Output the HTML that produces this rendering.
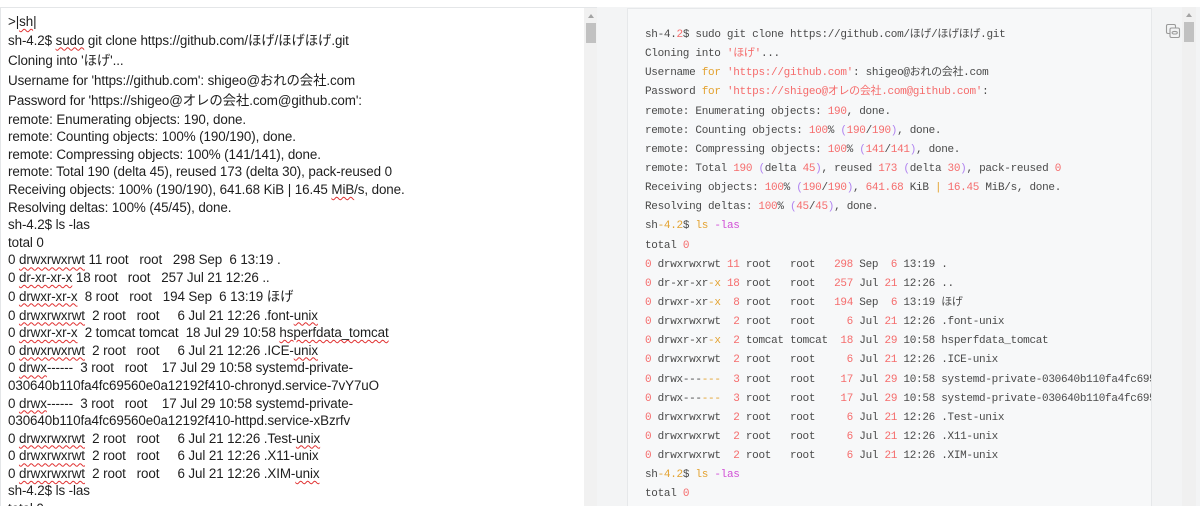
<!DOCTYPE html>
<html><head><meta charset="utf-8"><style>
*{margin:0;padding:0;box-sizing:border-box}
html,body{width:1200px;height:506px;overflow:hidden}
body{background:#fff;position:relative;font-family:"Liberation Sans","Noto Sans CJK JP",sans-serif}
#left{position:absolute;left:0;top:7px;width:597px;height:499px;border-top:1px solid #e4e6e8;border-left:1px solid #e4e6e8;background:#fff;overflow:hidden}
#ltext{position:absolute;left:7px;top:5px;font-size:13.4px;color:#1e1e1e;letter-spacing:-0.1px}
#ltext div{height:17.6px;line-height:17.6px;white-space:pre}
#ltext div.j{height:20px;line-height:20px}
.w{text-decoration:underline wavy #e03030;text-decoration-thickness:1px;text-underline-offset:2px}
.sb{position:absolute;top:0;width:14px;height:100%;background:#f1f1f1}
.sb .up{position:absolute;left:4px;top:6px;width:0;height:0;border-left:3px solid transparent;border-right:3px solid transparent;border-bottom:4px solid #a3a3a3}
.sb .th{position:absolute;left:2px;top:15px;width:10px;height:20px;background:#c1c1c1}
#right{position:absolute;left:597px;top:7px;width:603px;height:499px;background:#f3f4f5;overflow:hidden}
#code{position:absolute;left:30px;top:1px;width:525px;height:510px;background:#f7f8f9;border-left:1px solid #e6e8ea;border-right:1px solid #e6e8ea;border-top:1px solid #e6e8ea;overflow:hidden}
#ctext{position:absolute;left:17px;top:17px;font-family:"Liberation Mono","Noto Sans CJK JP",monospace;font-size:11px;letter-spacing:-0.3px;color:#4a4a4a}
#ctext div{height:19.15px;line-height:19.15px;white-space:pre}
.r{color:#f56c6c}.o{color:#e3a230}.p{color:#b184f0}.m{color:#d14fd6}
</style></head><body>
<div id="left">
<div id="ltext"><div>&gt;|<span class="w">sh</span>|</div><div class="j">sh-4.2$ <span class="w">sudo</span> git clone https://github.com/ほげ/ほげほげ.git</div><div class="j">Cloning into 'ほげ'...</div><div class="j">Username for 'https://github.com': shigeo@おれの会社.com</div><div class="j">Password for 'https://shigeo@オレの会社.com@github.com':</div><div>remote: Enumerating objects: 190, done.</div><div>remote: Counting objects: 100% (190/190), done.</div><div>remote: Compressing objects: 100% (141/141), done.</div><div>remote: Total 190 (delta 45), reused 173 (delta 30), pack-reused 0</div><div>Receiving objects: 100% (190/190), 641.68 KiB | 16.45 <span class="w">MiB</span>/s, done.</div><div>Resolving deltas: 100% (45/45), done.</div><div>sh-4.2$ ls -las</div><div>total 0</div><div>0 <span class="w">drwxrwxrwt</span> 11 root   root   298 Sep  6 13:19 .</div><div>0 <span class="w">dr-xr-xr-x</span> 18 root   root   257 Jul 21 12:26 ..</div><div class="j">0 <span class="w">drwxr-xr-x</span>  8 root   root   194 Sep  6 13:19 ほげ</div><div>0 <span class="w">drwxrwxrwt</span>  2 root   root     6 Jul 21 12:26 .font-<span class="w">unix</span></div><div>0 <span class="w">drwxr-xr-x</span>  2 tomcat tomcat  18 Jul 29 10:58 <span class="w">hsperfdata_tomcat</span></div><div>0 <span class="w">drwxrwxrwt</span>  2 root   root     6 Jul 21 12:26 .ICE-<span class="w">unix</span></div><div>0 <span class="w">drwx</span>------  3 root   root    17 Jul 29 10:58 systemd-private-</div><div>030640b110fa4fc69560e0a12192f410-chronyd.service-7vY7uO</div><div>0 <span class="w">drwx</span>------  3 root   root    17 Jul 29 10:58 systemd-private-</div><div>030640b110fa4fc69560e0a12192f410-httpd.service-xBzrfv</div><div>0 <span class="w">drwxrwxrwt</span>  2 root   root     6 Jul 21 12:26 .Test-<span class="w">unix</span></div><div>0 <span class="w">drwxrwxrwt</span>  2 root   root     6 Jul 21 12:26 .X11-unix</div><div>0 <span class="w">drwxrwxrwt</span>  2 root   root     6 Jul 21 12:26 .XIM-<span class="w">unix</span></div><div>sh-4.2$ ls -las</div><div>total 0</div></div>
<div class="sb" style="left:583px"><div class="up"></div><div class="th"></div></div>
</div>
<div id="right">
<div id="code"><div id="ctext"><div>sh-4.<span class="r">2</span>$ sudo git clone https://github.com/ほげ/ほげほげ.git</div><div>Cloning into <span class="r">'ほげ'</span>...</div><div>Username <span class="o">for</span> <span class="r">'https://github.com'</span>: shigeo@おれの会社.com</div><div>Password <span class="o">for</span> <span class="r">'https://shigeo@オレの会社.com@github.com'</span>:</div><div>remote: Enumerating objects: <span class="r">190</span>, done.</div><div>remote: Counting objects: <span class="r">100</span>% <span class="p">(</span><span class="r">190</span>/<span class="r">190</span><span class="p">)</span>, done.</div><div>remote: Compressing objects: <span class="r">100</span>% <span class="p">(</span><span class="r">141</span>/<span class="r">141</span><span class="p">)</span>, done.</div><div>remote: Total <span class="r">190</span> <span class="p">(</span>delta <span class="r">45</span><span class="p">)</span>, reused <span class="r">173</span> <span class="p">(</span>delta <span class="r">30</span><span class="p">)</span>, pack-reused <span class="r">0</span></div><div>Receiving objects: <span class="r">100</span>% <span class="p">(</span><span class="r">190</span>/<span class="r">190</span><span class="p">)</span>, <span class="r">641.68</span> KiB <span class="o">|</span> <span class="r">16.45</span> MiB/s, done.</div><div>Resolving deltas: <span class="r">100</span>% <span class="p">(</span><span class="r">45</span>/<span class="r">45</span><span class="p">)</span>, done.</div><div>sh<span class="o">-4.2</span>$ <span class="o">ls</span> <span class="m">-las</span></div><div>total <span class="r">0</span></div><div><span class="r">0</span> drwxrwxrwt <span class="r">11</span> root   root   <span class="r">298</span> Sep  <span class="r">6</span> 13:19 .</div><div><span class="r">0</span> dr-xr-xr<span class="o">-x</span> <span class="r">18</span> root   root   <span class="r">257</span> Jul <span class="r">21</span> 12:26 ..</div><div><span class="r">0</span> drwxr-xr<span class="o">-x</span>  <span class="r">8</span> root   root   <span class="r">194</span> Sep  <span class="r">6</span> 13:19 ほげ</div><div><span class="r">0</span> drwxrwxrwt  <span class="r">2</span> root   root     <span class="r">6</span> Jul <span class="r">21</span> 12:26 .font-unix</div><div><span class="r">0</span> drwxr-xr<span class="o">-x</span>  <span class="r">2</span> tomcat tomcat  <span class="r">18</span> Jul <span class="r">29</span> 10:58 hsperfdata_tomcat</div><div><span class="r">0</span> drwxrwxrwt  <span class="r">2</span> root   root     <span class="r">6</span> Jul <span class="r">21</span> 12:26 .ICE-unix</div><div><span class="r">0</span> drwx---<span class="o">---</span>  <span class="r">3</span> root   root    <span class="r">17</span> Jul <span class="r">29</span> 10:58 systemd-private-030640b110fa4fc69560e0a12192f410-chronyd.service-7vY7uO</div><div><span class="r">0</span> drwx---<span class="o">---</span>  <span class="r">3</span> root   root    <span class="r">17</span> Jul <span class="r">29</span> 10:58 systemd-private-030640b110fa4fc69560e0a12192f410-httpd.service-xBzrfv</div><div><span class="r">0</span> drwxrwxrwt  <span class="r">2</span> root   root     <span class="r">6</span> Jul <span class="r">21</span> 12:26 .Test-unix</div><div><span class="r">0</span> drwxrwxrwt  <span class="r">2</span> root   root     <span class="r">6</span> Jul <span class="r">21</span> 12:26 .X11-unix</div><div><span class="r">0</span> drwxrwxrwt  <span class="r">2</span> root   root     <span class="r">6</span> Jul <span class="r">21</span> 12:26 .XIM-unix</div><div>sh<span class="o">-4.2</span>$ <span class="o">ls</span> <span class="m">-las</span></div><div>total <span class="r">0</span></div></div></div>
<svg style="position:absolute;left:568px;top:16px" width="16" height="16" viewBox="0 0 16 16" fill="none" stroke="#9a9a9a" stroke-width="1.1"><rect x="1.5" y="1.5" width="9" height="9" rx="1.5"/><rect x="5" y="5" width="9.5" height="9.5" rx="1.5" fill="#f3f4f5"/><ellipse cx="9.7" cy="9.7" rx="2.6" ry="1.3"/></svg>
<div class="sb" style="left:585px;background:#f0f0f0"><div class="up"></div><div class="th"></div></div>
</div>
</body></html>
